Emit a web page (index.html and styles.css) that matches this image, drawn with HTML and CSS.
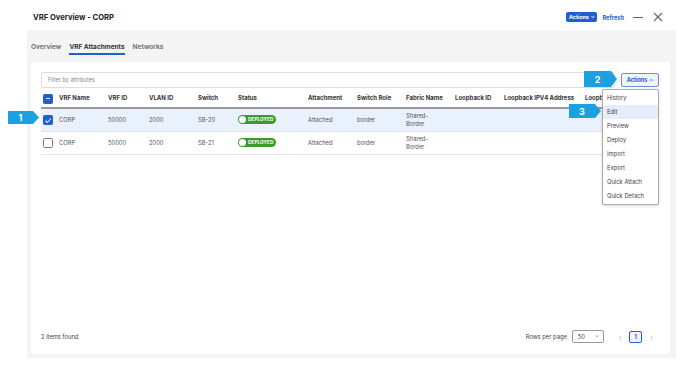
FILE: index.html
```html
<!DOCTYPE html>
<html lang="en">
<head>
    <meta charset="UTF-8">
    <title>VRF Overview - CORP</title>
    <link rel="stylesheet" href="styles.css">
</head>
<body>
    <div class="topbar">
        <div class="title">VRF Overview - CORP</div>
        <div class="top-actions">
            <button class="btn-primary">Actions <span class="caret">&#8964;</span></button>
            <a class="link">Refresh</a>
            <span class="minimize"></span>
            <svg class="close" width="10" height="10" viewBox="0 0 10 10">
                <path d="M1 1 L9 9 M9 1 L1 9" stroke="#666" stroke-width="1.1" fill="none"/>
            </svg>
        </div>
    </div>

    <div class="panel">
        <div class="tabs">
            <span class="tab">Overview</span>
            <span class="tab active">VRF Attachments</span>
            <span class="tab">Networks</span>
        </div>

        <div class="card">
            <div class="filter-row">
                <div class="filter">Filter by attributes</div>
                <div class="actions-wrap">
                    <button class="btn-outline">Actions <span class="caret up">&#8963;</span></button>
                    <ul class="menu">
                        <li>History</li>
                        <li class="hover">Edit</li>
                        <li>Preview</li>
                        <li>Deploy</li>
                        <li>Import</li>
                        <li>Export</li>
                        <li>Quick Attach</li>
                        <li>Quick Detach</li>
                    </ul>
                </div>
            </div>

            <div class="table">
                <div class="row head">
                    <div><span class="check partial"></span></div>
                    <div>VRF Name</div>
                    <div>VRF ID</div>
                    <div>VLAN ID</div>
                    <div>Switch</div>
                    <div>Status</div>
                    <div>Attachment</div>
                    <div>Switch Role</div>
                    <div>Fabric Name</div>
                    <div>Loopback ID</div>
                    <div>Loopback IPV4 Address</div>
                    <div>Loopback IPV6 Address</div>
                </div>
                <div class="row selected">
                    <div><span class="check on"></span></div>
                    <div>CORP</div>
                    <div>50000</div>
                    <div>2000</div>
                    <div>SB-20</div>
                    <div><span class="pill"><i></i>DEPLOYED</span></div>
                    <div>Attached</div>
                    <div>border</div>
                    <div>Shared-<br>Border</div>
                    <div></div>
                    <div></div>
                    <div></div>
                </div>
                <div class="row">
                    <div><span class="check"></span></div>
                    <div>CORP</div>
                    <div>50000</div>
                    <div>2000</div>
                    <div>SB-21</div>
                    <div><span class="pill"><i></i>DEPLOYED</span></div>
                    <div>Attached</div>
                    <div>border</div>
                    <div>Shared-<br>Border</div>
                    <div></div>
                    <div></div>
                    <div></div>
                </div>
            </div>

            <div class="footer">
                <span class="count">2 items found</span>
                <div class="pager">
                    <span>Rows per page</span>
                    <span class="select">50 <span class="caret">&#8964;</span></span>
                    <span class="arrow">&#8249;</span>
                    <span class="page">1</span>
                    <span class="arrow">&#8250;</span>
                </div>
            </div>
        </div>
    </div>

    <!-- step callouts -->
    <div class="callout c1">1</div>
    <div class="callout c2">2</div>
    <div class="callout c3">3</div>
</body>
</html>
```

FILE: styles.css
```css
body {
    margin: 0;
    background-color: white;
    font-family: Inter, "Noto Sans", sans-serif;
    color: #444;
    font-size: 6.3px;
    width: 696px;
    height: 370px;
    position: relative;
    overflow: hidden;
}

.topbar {
    height: 30px;
    display: flex;
    align-items: center;
    justify-content: space-between;
    padding: 0 33px 0 33px;
    box-sizing: border-box;
}

.title {
    font-size: 7.6px;
    font-weight: 700;
    color: #222;
    margin-top: 4px;
}

.top-actions {
    display: flex;
    align-items: center;
    margin-top: 4px;
}

.btn-primary {
    background-color: #1f5fcf;
    color: white;
    border: none;
    border-radius: 2px;
    height: 10px;
    width: 31px;
    padding: 0;
    font-family: inherit;
    font-size: 5.3px;
    font-weight: 700;
    display: flex;
    align-items: center;
    justify-content: center;
    gap: 2px;
}

.caret {
    font-size: 5px;
    line-height: 1;
    position: relative;
    top: -1px;
}

.caret.up {
    top: 1px;
}

.link {
    color: #1f5fcf;
    font-weight: 700;
    font-size: 5.7px;
    margin-left: 5px;
}

.minimize {
    width: 10px;
    height: 1px;
    background-color: #666;
    margin-left: 9px;
}

.close {
    margin-left: 10px;
}

.panel {
    margin-left: 27px;
    width: 649px;
    height: 328px;
    background-color: #f4f4f4;
    display: flex;
    flex-direction: column;
}

.tabs {
    height: 32px;
    display: flex;
    align-items: center;
    gap: 8px;
    padding-left: 4px;
}

.tab {
    font-size: 6.5px;
    font-weight: 700;
    color: #777;
    padding-top: 1px;
    position: relative;
}

.tab.active {
    color: #333;
}

.tab.active::after {
    content: '';
    position: absolute;
    left: 0;
    right: 0;
    bottom: -4px;
    height: 1.5px;
    background-color: #1f5fcf;
}

.card {
    margin-left: 4px;
    width: 639px;
    height: 292px;
    background-color: white;
    border-radius: 4px;
    box-sizing: border-box;
    padding: 10px 11px 11px 10px;
    display: flex;
    flex-direction: column;
}

.filter-row {
    display: flex;
    align-items: center;
    height: 16px;
    gap: 6px;
}

.filter {
    flex: 1;
    height: 16px;
    border: 1px solid #ddd;
    border-radius: 2px;
    box-sizing: border-box;
    display: flex;
    align-items: center;
    padding-left: 6px;
    color: #888;
    font-size: 5.5px;
}

.actions-wrap {
    position: relative;
}

.btn-outline {
    width: 38px;
    height: 14px;
    border: 1px solid #6c8fd6;
    border-radius: 2px;
    background-color: #eef3fc;
    color: #1f5fcf;
    font-family: inherit;
    font-size: 5.5px;
    font-weight: 700;
    padding: 0;
    display: flex;
    align-items: center;
    justify-content: center;
    gap: 2px;
}

.menu {
    position: absolute;
    right: 0;
    top: 16px;
    width: 57px;
    margin: 0;
    padding: 1px 0;
    list-style: none;
    background-color: white;
    border: 1px solid #aaa;
    border-radius: 2px;
    box-shadow: 0 1px 3px rgba(0, 0, 0, 0.15);
    box-sizing: border-box;
    z-index: 10;
}

.menu li {
    height: 14px;
    line-height: 14px;
    padding-left: 4px;
    font-size: 5.8px;
    color: #444;
}

.menu li.hover {
    background-color: #e4edf9;
}

.table {
    flex: 1;
    margin-top: 2px;
}

.row {
    display: grid;
    grid-template-columns: 18px 49px 41px 49px 40px 70px 49px 49px 49px 49px 81px 1fr;
    height: 22px;
    align-items: center;
    border-bottom: 1px solid #e4e4e4;
    white-space: nowrap;
    overflow: hidden;
    color: #555;
    font-size: 5.8px;
}

.row > div {
    overflow: hidden;
    line-height: 8.5px;
}

.row.head {
    height: 17px;
    border-bottom: 2px solid #999;
    font-weight: 700;
    color: #333;
    font-size: 6px;
}

.row.selected {
    background-color: #e9f1fc;
}

.check {
    display: block;
    width: 8px;
    height: 8px;
    margin-left: 2px;
    border: 1px solid #777;
    border-radius: 1.5px;
    background-color: white;
    position: relative;
}

.check.on,
.check.partial {
    background-color: #1f5fcf;
    border-color: #1f5fcf;
}

.check.partial::after {
    content: '';
    position: absolute;
    left: 2px;
    right: 2px;
    top: 3.5px;
    height: 1px;
    background-color: white;
}

.check.on::after {
    content: '';
    position: absolute;
    left: 2.6px;
    top: 0.6px;
    width: 2px;
    height: 4.5px;
    border: solid white;
    border-width: 0 1px 1px 0;
    transform: rotate(45deg);
}

.pill {
    display: inline-flex;
    align-items: center;
    height: 9px;
    width: 38px;
    box-sizing: border-box;
    padding-left: 1px;
    gap: 2px;
    background-color: #3b9a2b;
    border-radius: 5px;
    color: white;
    font-size: 4.8px;
    font-weight: 700;
}

.pill i {
    width: 7px;
    height: 7px;
    border-radius: 50%;
    background-color: white;
}

.footer {
    height: 13px;
    display: flex;
    align-items: center;
    justify-content: space-between;
    font-size: 5.8px;
    color: #444;
}

.pager {
    display: flex;
    align-items: center;
    margin-right: 6px;
}

.select {
    width: 32px;
    height: 13px;
    border: 1px solid #999;
    border-radius: 2px;
    box-sizing: border-box;
    display: flex;
    align-items: center;
    justify-content: space-between;
    padding: 0 4px 0 5px;
    margin-left: 5px;
}

.arrow {
    color: #bbb;
    font-size: 8px;
    margin: 0 7px 0 15px;
}

.arrow:last-child {
    margin: 0 0 0 8px;
}

.page {
    width: 13px;
    height: 12px;
    border: 1px solid #1f5fcf;
    border-radius: 2px;
    box-sizing: border-box;
    display: flex;
    align-items: center;
    justify-content: center;
    background-color: #eef3fc;
    color: #1f5fcf;
    font-weight: 700;
}

.callout {
    position: absolute;
    background-color: #1ba1e2;
    color: white;
    font-weight: 700;
    font-size: 9px;
    display: flex;
    align-items: center;
    justify-content: center;
    padding-right: 6px;
    box-sizing: border-box;
    clip-path: polygon(0 0, calc(100% - 6px) 0, 100% 50%, calc(100% - 6px) 100%, 0 100%);
    z-index: 20;
}

.c1 {
    left: 8px;
    top: 111px;
    width: 31px;
    height: 13px;
}

.c2 {
    left: 584px;
    top: 71px;
    width: 33px;
    height: 16px;
}

.c3 {
    left: 569px;
    top: 104px;
    width: 32px;
    height: 14px;
}
```
